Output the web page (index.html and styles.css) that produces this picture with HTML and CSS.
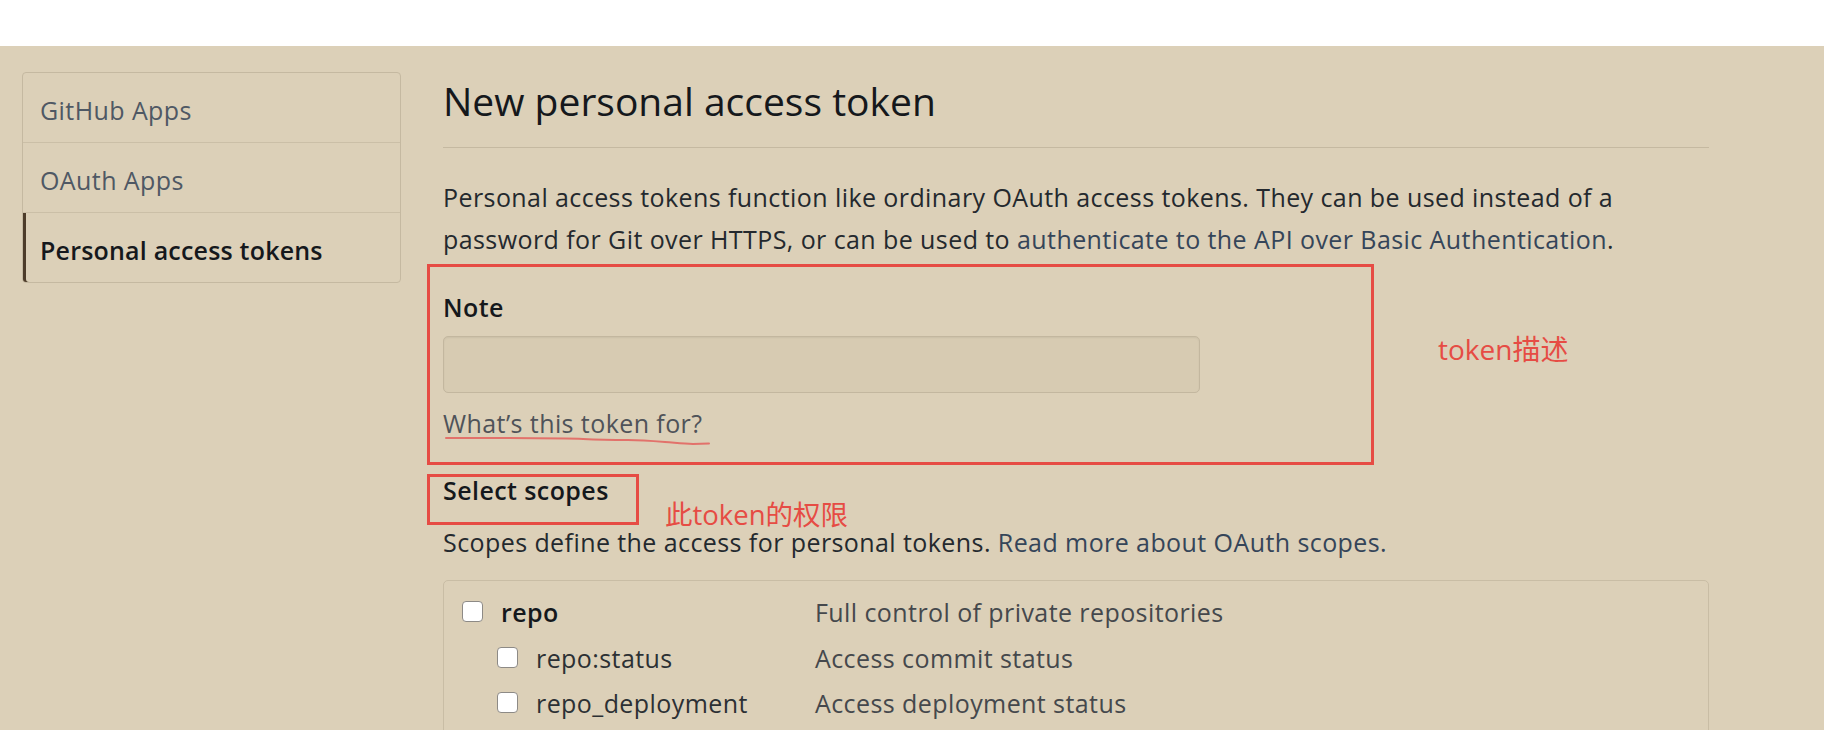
FILE: index.html
```html
<!DOCTYPE html>
<html lang="en">
<head>
<meta charset="utf-8">
<title>New personal access token</title>
<link rel="stylesheet" href="styles.css">
</head>
<body>
<div class="topbar"></div>
<div class="page">
  <nav class="menu">
    <a class="menu-item" href="#">GitHub Apps</a>
    <a class="menu-item" href="#">OAuth Apps</a>
    <a class="menu-item selected" href="#">Personal access tokens</a>
  </nav>
  <main class="content">
    <h2 class="title">New personal access token</h2>
    <p class="lead">Personal access tokens function like ordinary OAuth access tokens. They can be used instead of a password for Git over HTTPS, or can be used to <a class="link" href="#">authenticate to the API over Basic Authentication</a>.</p>
    <label class="label">Note</label>
    <input class="input" type="text">
    <p class="note">What’s this token for?</p>
    <h3 class="label scopes-title">Select scopes</h3>
    <p class="help">Scopes define the access for personal tokens. <a class="link" href="#">Read more about OAuth scopes.</a></p>
    <div class="scopes">
      <div class="row"><div class="name"><span class="cb"></span><b>repo</b></div><span class="desc">Full control of private repositories</span></div>
      <div class="row"><div class="name sub"><span class="cb"></span><span>repo:status</span></div><span class="desc">Access commit status</span></div>
      <div class="row"><div class="name sub"><span class="cb"></span><span>repo_deployment</span></div><span class="desc">Access deployment status</span></div>
      <div class="row"><div class="name sub"><span class="cb"></span><span>public_repo</span></div><span class="desc">Access public repositories</span></div>
    </div>

    <div class="anno-box box-note"></div>
    <div class="anno-box box-scopes"></div>
    <span class="anno-text t1">token描述</span>
    <span class="anno-text t2">此token的权限</span>
    <svg class="squiggle" viewBox="0 0 270 12" width="270" height="12">
      <path d="M3 3 C 60 3, 120 3, 140 4 S 175 5, 185 5 S 210 6, 222 7 S 240 9, 250 9 L 266 8.5" fill="none" stroke="#e2726b" stroke-width="2" stroke-linecap="round"/>
    </svg>
  </main>
</div>
</body>
</html>
```

FILE: styles.css
```css
html { overflow: hidden; }
body {
  margin: 0;
  background: #dcd0b8;
  font-family: "Open Sans", "Noto Sans CJK SC", sans-serif;
  font-size: 25px;
  letter-spacing: 0.42px;
  line-height: 42px;
  color: #24292e;
}
.topbar { height: 46px; background: #ffffff; }
.page {
  display: flex;
  gap: 42px;
  padding: 26px 0 0 22px;
}
.menu {
  width: 379px;
  box-sizing: border-box;
  flex: none;
  align-self: flex-start;
  display: flex;
  flex-direction: column;
  border: 1px solid #c5b9a1;
  border-radius: 4px;
}
.menu-item {
  padding: 16px 17px 11px;
  border-bottom: 1px solid #cbbfa7;
  color: #4f5864;
  text-decoration: none;
}
.menu-item:last-child { border-bottom: 0; }
.menu-item.selected {
  font-weight: 600;
  letter-spacing: 0.2px;
  color: #15181c;
  box-shadow: inset 3px 0 #4d3c2a;
  border-bottom-left-radius: 3px;
}
.content {
  position: relative;
  width: 1266px;
  flex: none;
}
.title {
  margin: 4px 0 0;
  padding-bottom: 21px;
  border-bottom: 1px solid #c5b9a1;
  font-size: 39px;
  letter-spacing: 0;
  line-height: 50px;
  font-weight: 400;
  color: #15181c;
}
.lead { margin: 28px 0 0; }
.link { color: #354559; text-decoration: none; }
.label {
  display: block;
  margin: 26px 0 0;
  font-size: 25px;
  line-height: 42px;
  font-weight: 600;
  color: #15181c;
}
.input {
  display: block;
  box-sizing: border-box;
  width: 757px;
  height: 57px;
  margin: 8px 0 0;
  border: 1px solid #c3b79f;
  border-radius: 5px;
  background: #d7cbb2;
  box-shadow: inset 0 1px 2px rgba(0, 0, 0, 0.06);
}
.note { margin: 9px 0 0; color: #4f5359; }
.scopes-title { margin-top: 25px; }
.help { margin: 10px 0 0; }
.scopes {
  margin-top: 17px;
  border: 1px solid #c9bda5;
  border-radius: 5px;
  padding: 9px 0 0 18px;
  height: 300px;
}
.row {
  display: flex;
  align-items: center;
  height: 45.5px;
  line-height: 45.5px;
}
.name {
  width: 353px;
  box-sizing: border-box;
  flex: none;
  display: flex;
  align-items: center;
  gap: 18px;
  color: #2c3034;
}
.name b { font-weight: 600; color: #15181c; }
.name.sub { padding-left: 35px; }
.cb {
  width: 21px;
  height: 21px;
  box-sizing: border-box;
  flex: none;
  border: 1px solid #8d8a86;
  border-radius: 4px;
  background: #ffffff;
  transform: translateY(-1px);
}
.desc { color: #45484c; }

.anno-box {
  position: absolute;
  box-sizing: border-box;
  border: 3px solid #e64c44;
}
.box-note { left: -16px; top: 192px; width: 947px; height: 201px; }
.box-scopes { left: -16px; top: 402px; width: 212px; height: 51px; }
.anno-text {
  position: absolute;
  color: #e64c44;
  white-space: nowrap;
  letter-spacing: 0;
  line-height: 1;
  font-family: "Open Sans", "Noto Sans CJK SC", sans-serif;
}
.t1 { left: 995px; top: 263px; font-size: 28px; }
.t2 { left: 222px; top: 429px; font-size: 27.5px; }
.squiggle { position: absolute; left: 0; top: 363px; }
```
